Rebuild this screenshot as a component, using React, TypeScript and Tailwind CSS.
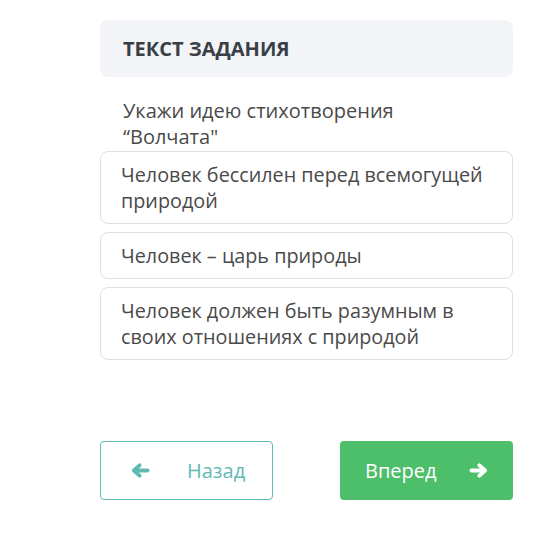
const options = [
  'Человек бессилен перед всемогущей природой',
  'Человек – царь природы',
  'Человек должен быть разумным в своих отношениях с природой',
];

function Arrow({ flip }: { flip?: boolean }) {
  return (
    <svg
      viewBox="0 0 20 16"
      className={flip ? 'h-[15px] w-[19px] -scale-x-100' : 'h-[15px] w-[19px]'}
      fill="none"
      stroke="currentColor"
      strokeWidth={4.2}
      strokeLinecap="round"
      strokeLinejoin="round"
    >
      <path d="M17.5 8H4" />
      <path d="M9 2.5L3 8l6 5.5" />
    </svg>
  );
}

export default function App() {
  return (
    <div
      className="min-h-screen w-[539px] bg-white pl-[100px] pt-[20px]"
      style={{ fontFamily: '"Open Sans", "Noto Sans", sans-serif' }}
    >
      <div className="w-[413px]">
        <div className="flex h-[57px] items-center rounded-lg bg-[#f2f4f7] px-[23px]">
          <h1 className="text-[20px] font-bold uppercase text-[#3a3f47]">Текст задания</h1>
        </div>

        <p className="mt-[21px] pl-[23px] pr-[100px] text-[20px] leading-[26px] text-[#4a4a4a]">
          Укажи идею стихотворения “Волчата"
        </p>

        <div className="mt-px flex flex-col gap-[8px]">
          {options.map((o) => (
            <div
              key={o}
              className="rounded-lg border border-[#e0e0e0] py-[9.5px] pl-[20px] pr-[16px] text-[19.8px] leading-[26px] text-[#4a4a4a]"
            >
              {o}
            </div>
          ))}
        </div>

        <div className="mt-[81px] flex justify-between">
          <button className="flex h-[59px] w-[173px] items-center rounded-[4px] border-[1.5px] border-[#5fbab3] pl-[30px] text-[20px] text-[#5fbab3]">
            <Arrow />
            <span className="ml-[37px]">Назад</span>
          </button>
          <button className="flex h-[59px] w-[173px] items-center rounded-[4px] bg-[#4dbe6a] pl-[25px] text-[20px] text-white">
            <span>Вперед</span>
            <span className="ml-[32px] flex">
              <Arrow flip />
            </span>
          </button>
        </div>
      </div>
    </div>
  );
}
